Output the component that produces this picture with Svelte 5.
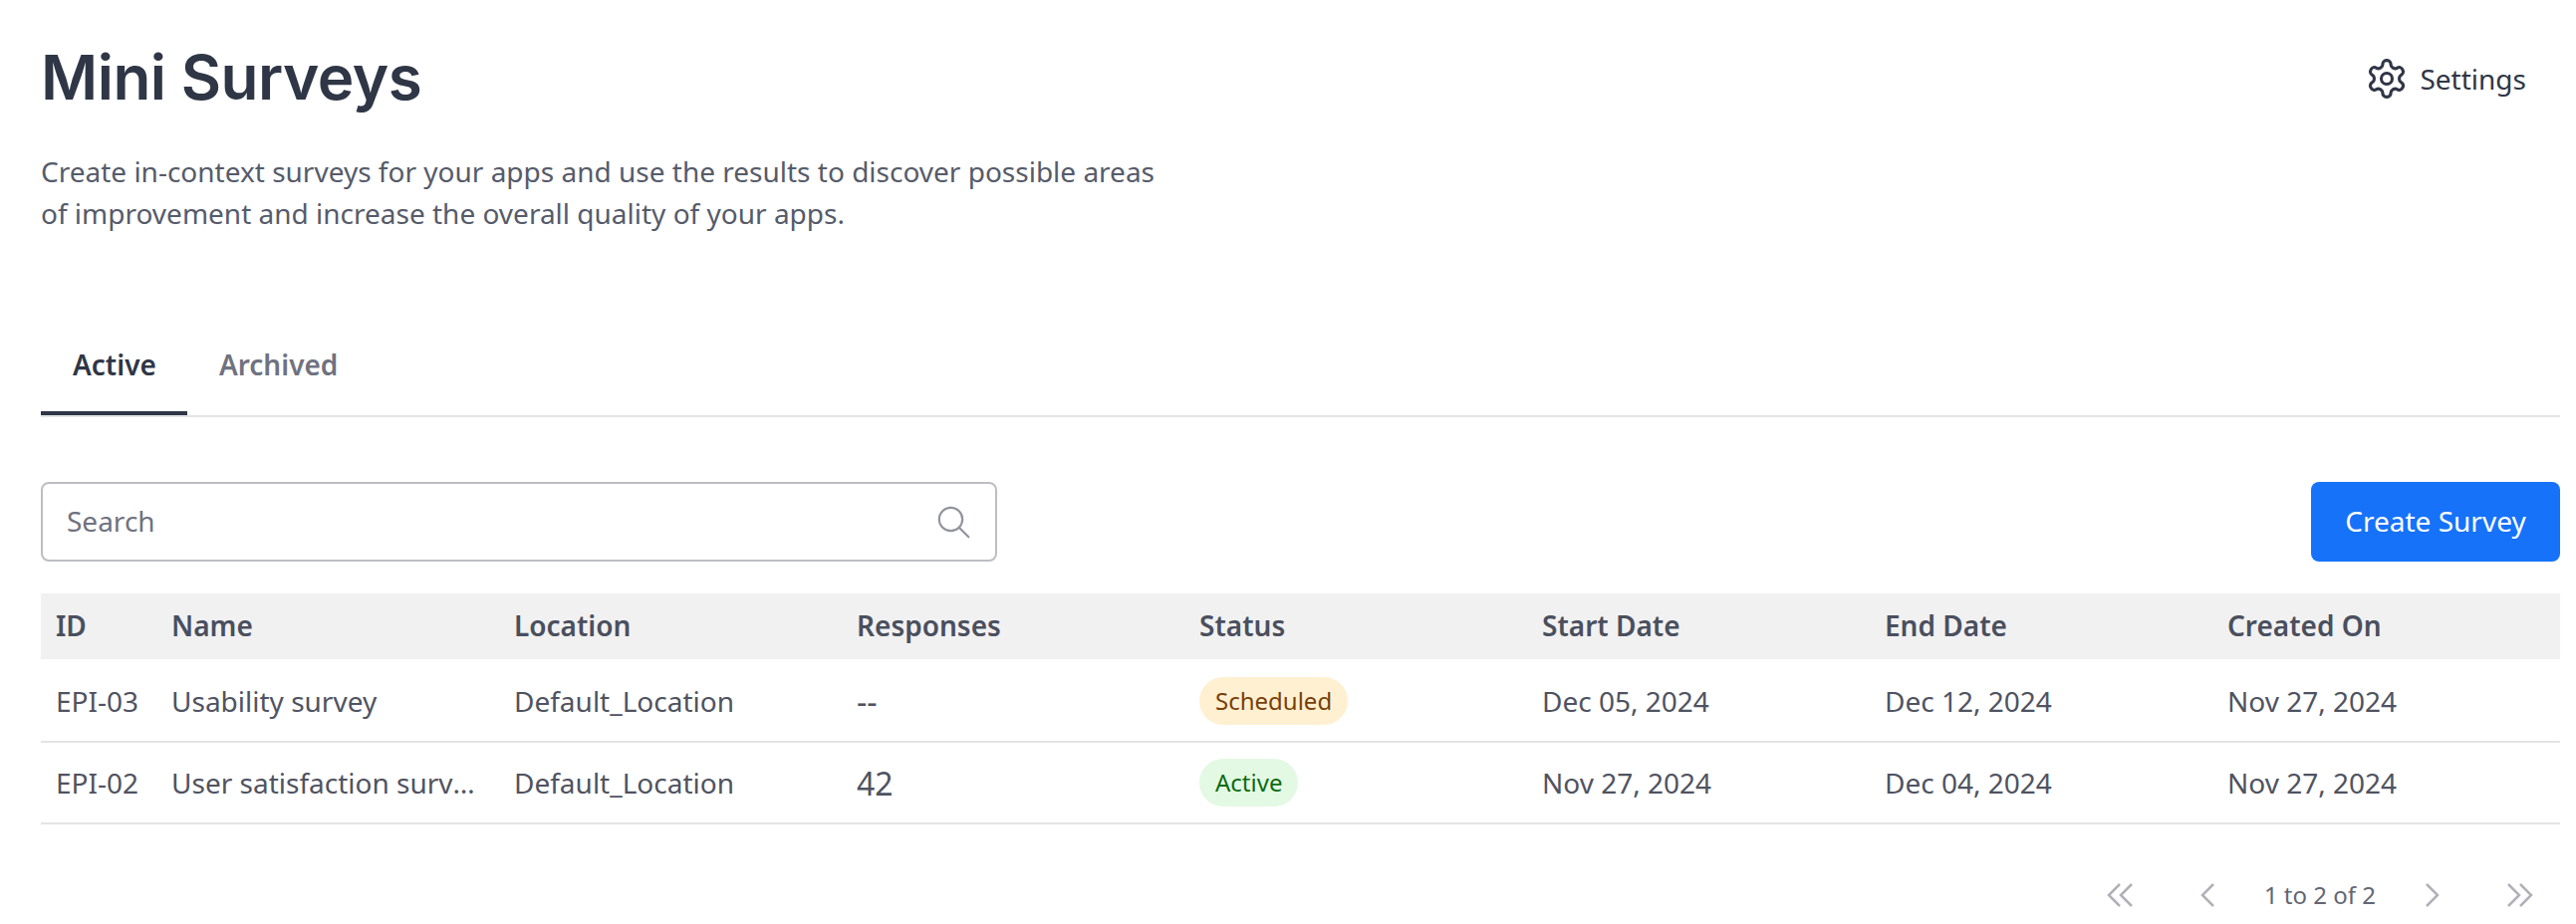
<script lang="ts">
  const columns = ['ID', 'Name', 'Location', 'Responses', 'Status', 'Start Date', 'End Date', 'Created On'];

  const surveys = [
    { id: 'EPI-03', name: 'Usability survey', location: 'Default_Location', responses: '--', status: 'Scheduled', start: 'Dec 05, 2024', end: 'Dec 12, 2024', created: 'Nov 27, 2024' },
    { id: 'EPI-02', name: 'User satisfaction survey', location: 'Default_Location', responses: '42', status: 'Active', start: 'Nov 27, 2024', end: 'Dec 04, 2024', created: 'Nov 27, 2024' }
  ];
</script>

<div class="page">
  <header class="header">
    <div>
      <h1>Mini Surveys</h1>
      <p class="intro">Create in-context surveys for your apps and use the results to discover possible areas<br />of improvement and increase the overall quality of your apps.</p>
    </div>
    <button class="settings">
      <svg width="44" height="44" viewBox="0 0 24 24" fill="none" stroke="#2f3646" stroke-width="1.7" stroke-linejoin="round" stroke-linecap="round">
        <path d="M12.22 2h-.44a2 2 0 0 0-2 2v.18a2 2 0 0 1-1 1.73l-.43.25a2 2 0 0 1-2 0l-.15-.08a2 2 0 0 0-2.73.73l-.22.38a2 2 0 0 0 .73 2.73l.15.1a2 2 0 0 1 1 1.72v.51a2 2 0 0 1-1 1.74l-.15.09a2 2 0 0 0-.73 2.73l.22.38a2 2 0 0 0 2.73.73l.15-.08a2 2 0 0 1 2 0l.43.25a2 2 0 0 1 1 1.73V20a2 2 0 0 0 2 2h.44a2 2 0 0 0 2-2v-.18a2 2 0 0 1 1-1.73l.43-.25a2 2 0 0 1 2 0l.15.08a2 2 0 0 0 2.73-.73l.22-.39a2 2 0 0 0-.73-2.73l-.15-.08a2 2 0 0 1-1-1.74v-.5a2 2 0 0 1 1-1.74l.15-.09a2 2 0 0 0 .73-2.73l-.22-.38a2 2 0 0 0-2.73-.73l-.15.08a2 2 0 0 1-2 0l-.43-.25a2 2 0 0 1-1-1.73V4a2 2 0 0 0-2-2z" />
        <circle cx="12" cy="12" r="3" />
      </svg>
      <span>Settings</span>
    </button>
  </header>

  <nav class="tabs">
    <div class="tab selected">Active</div>
    <div class="tab">Archived</div>
  </nav>

  <div class="toolbar">
    <div class="search">
      <span>Search</span>
      <svg width="40" height="40" viewBox="0 0 24 24" fill="none" stroke="#92939c" stroke-width="1.3" stroke-linecap="round">
        <circle cx="10.5" cy="10.5" r="7" />
        <path d="M15.6 15.6l5.6 5.6" />
      </svg>
    </div>
    <button class="create">Create Survey</button>
  </div>

  <div class="table">
    <div class="row head">
      {#each columns as col}
        <div class="cell">{col}</div>
      {/each}
    </div>
    {#each surveys as s}
      <div class="row body">
        <div class="cell">{s.id}</div>
        <div class="cell name"><span>{s.name}</span></div>
        <div class="cell">{s.location}</div>
        <div class="cell responses">{s.responses}</div>
        <div class="cell"><span class="pill {s.status.toLowerCase()}">{s.status}</span></div>
        <div class="cell">{s.start}</div>
        <div class="cell">{s.end}</div>
        <div class="cell">{s.created}</div>
      </div>
    {/each}
  </div>

  <div class="pager">
    <svg class="first" width="26" height="26" viewBox="0 0 26 26"><path d="M13 2L2 13l11 11M25 2L14 13l11 11" /></svg>
    <svg width="14" height="26" viewBox="0 0 14 26"><path d="M13 2L2 13l11 11" /></svg>
    <span>1 to 2 of 2</span>
    <svg width="14" height="26" viewBox="0 0 14 26"><path d="M1 2l11 11L1 24" /></svg>
    <svg class="last" width="26" height="26" viewBox="0 0 26 26"><path d="M1 2l11 11L1 24M13 2l11 11-11 11" /></svg>
  </div>
</div>

<style>
  :global(body) {
    margin: 0;
    background: #fff;
    font-family: "Noto Sans", sans-serif;
    color: #4f5361;
  }

  .page {
    padding: 0 16px 0 41px;
  }

  .header {
    display: flex;
    justify-content: space-between;
    align-items: flex-start;
    padding-top: 38px;
  }

  h1 {
    margin: 0;
    font-family: Inter, sans-serif;
    font-size: 62px;
    line-height: 80px;
    font-weight: 600;
    letter-spacing: -0.5px;
    color: #2f3646;
  }

  .intro {
    margin: 33px 0 0;
    font-size: 28px;
    line-height: 42px;
    color: #565b6a;
  }

  .settings {
    display: flex;
    align-items: center;
    gap: 11px;
    margin-top: 19px;
    margin-right: 34px;
    padding: 0;
    border: 0;
    background: none;
    font: inherit;
    font-size: 28px;
    color: #2f3646;
  }

  .tabs {
    display: flex;
    margin-top: 89px;
    border-bottom: 2px solid #e4e4e7;
  }

  .tab {
    padding: 17px 32px 26px;
    height: 50px;
    line-height: 50px;
    font-size: 28px;
    font-weight: 600;
    color: #6f7280;
  }

  .tab.selected {
    padding-right: 31px;
    color: #2f3646;
    box-shadow: inset 0 -4px 0 #2f3646;
  }

  .toolbar {
    display: flex;
    justify-content: space-between;
    margin-top: 65px;
  }

  .search {
    display: flex;
    align-items: center;
    justify-content: space-between;
    box-sizing: border-box;
    width: 960px;
    height: 80px;
    padding: 0 22px 0 24px;
    border: 2px solid #bdbec4;
    border-radius: 8px;
    font-size: 28px;
    color: #6f7280;
  }

  .search span {
    padding-bottom: 2px;
  }

  .create {
    width: 250px;
    height: 80px;
    padding: 0 0 2px;
    border: 0;
    border-radius: 8px;
    background: #1672f9;
    color: #fff;
    font: inherit;
    font-size: 28px;
  }

  .table {
    margin-top: 32px;
  }

  .row {
    display: grid;
    grid-template-columns: 116px repeat(6, 344px) 1fr;
    align-items: center;
  }

  .cell {
    min-width: 0;
    padding: 0 15px;
    font-size: 28px;
  }

  .head {
    height: 66px;
    margin-bottom: 2px;
    background: #f1f1f1;
  }

  .head .cell {
    padding-bottom: 2px;
    font-weight: 600;
    color: #4a4f5e;
  }

  .body {
    height: 80px;
    border-bottom: 2px solid #e4e4e7;
  }

  .name span {
    display: block;
    max-width: 306px;
    overflow: hidden;
    white-space: nowrap;
    text-overflow: ellipsis;
  }

  .responses {
    font-size: 32px;
  }

  .pill {
    display: inline-block;
    padding: 0 16px;
    height: 48px;
    line-height: 48px;
    border-radius: 24px;
    font-size: 24px;
    vertical-align: middle;
  }

  .scheduled {
    background: #fff0d1;
    color: #7a3e06;
  }

  .active {
    background: #e3f9e3;
    color: #0d6b12;
  }

  .pager {
    display: flex;
    justify-content: flex-end;
    align-items: center;
    gap: 50px;
    margin-top: 54px;
    padding-right: 27px;
    font-size: 24px;
    color: #626674;
  }

  .pager svg {
    fill: none;
    stroke: #b0b1b8;
    stroke-width: 2.5;
  }

  .pager .first {
    margin-right: 18px;
  }

  .pager .last {
    margin-left: 18px;
  }
</style>
